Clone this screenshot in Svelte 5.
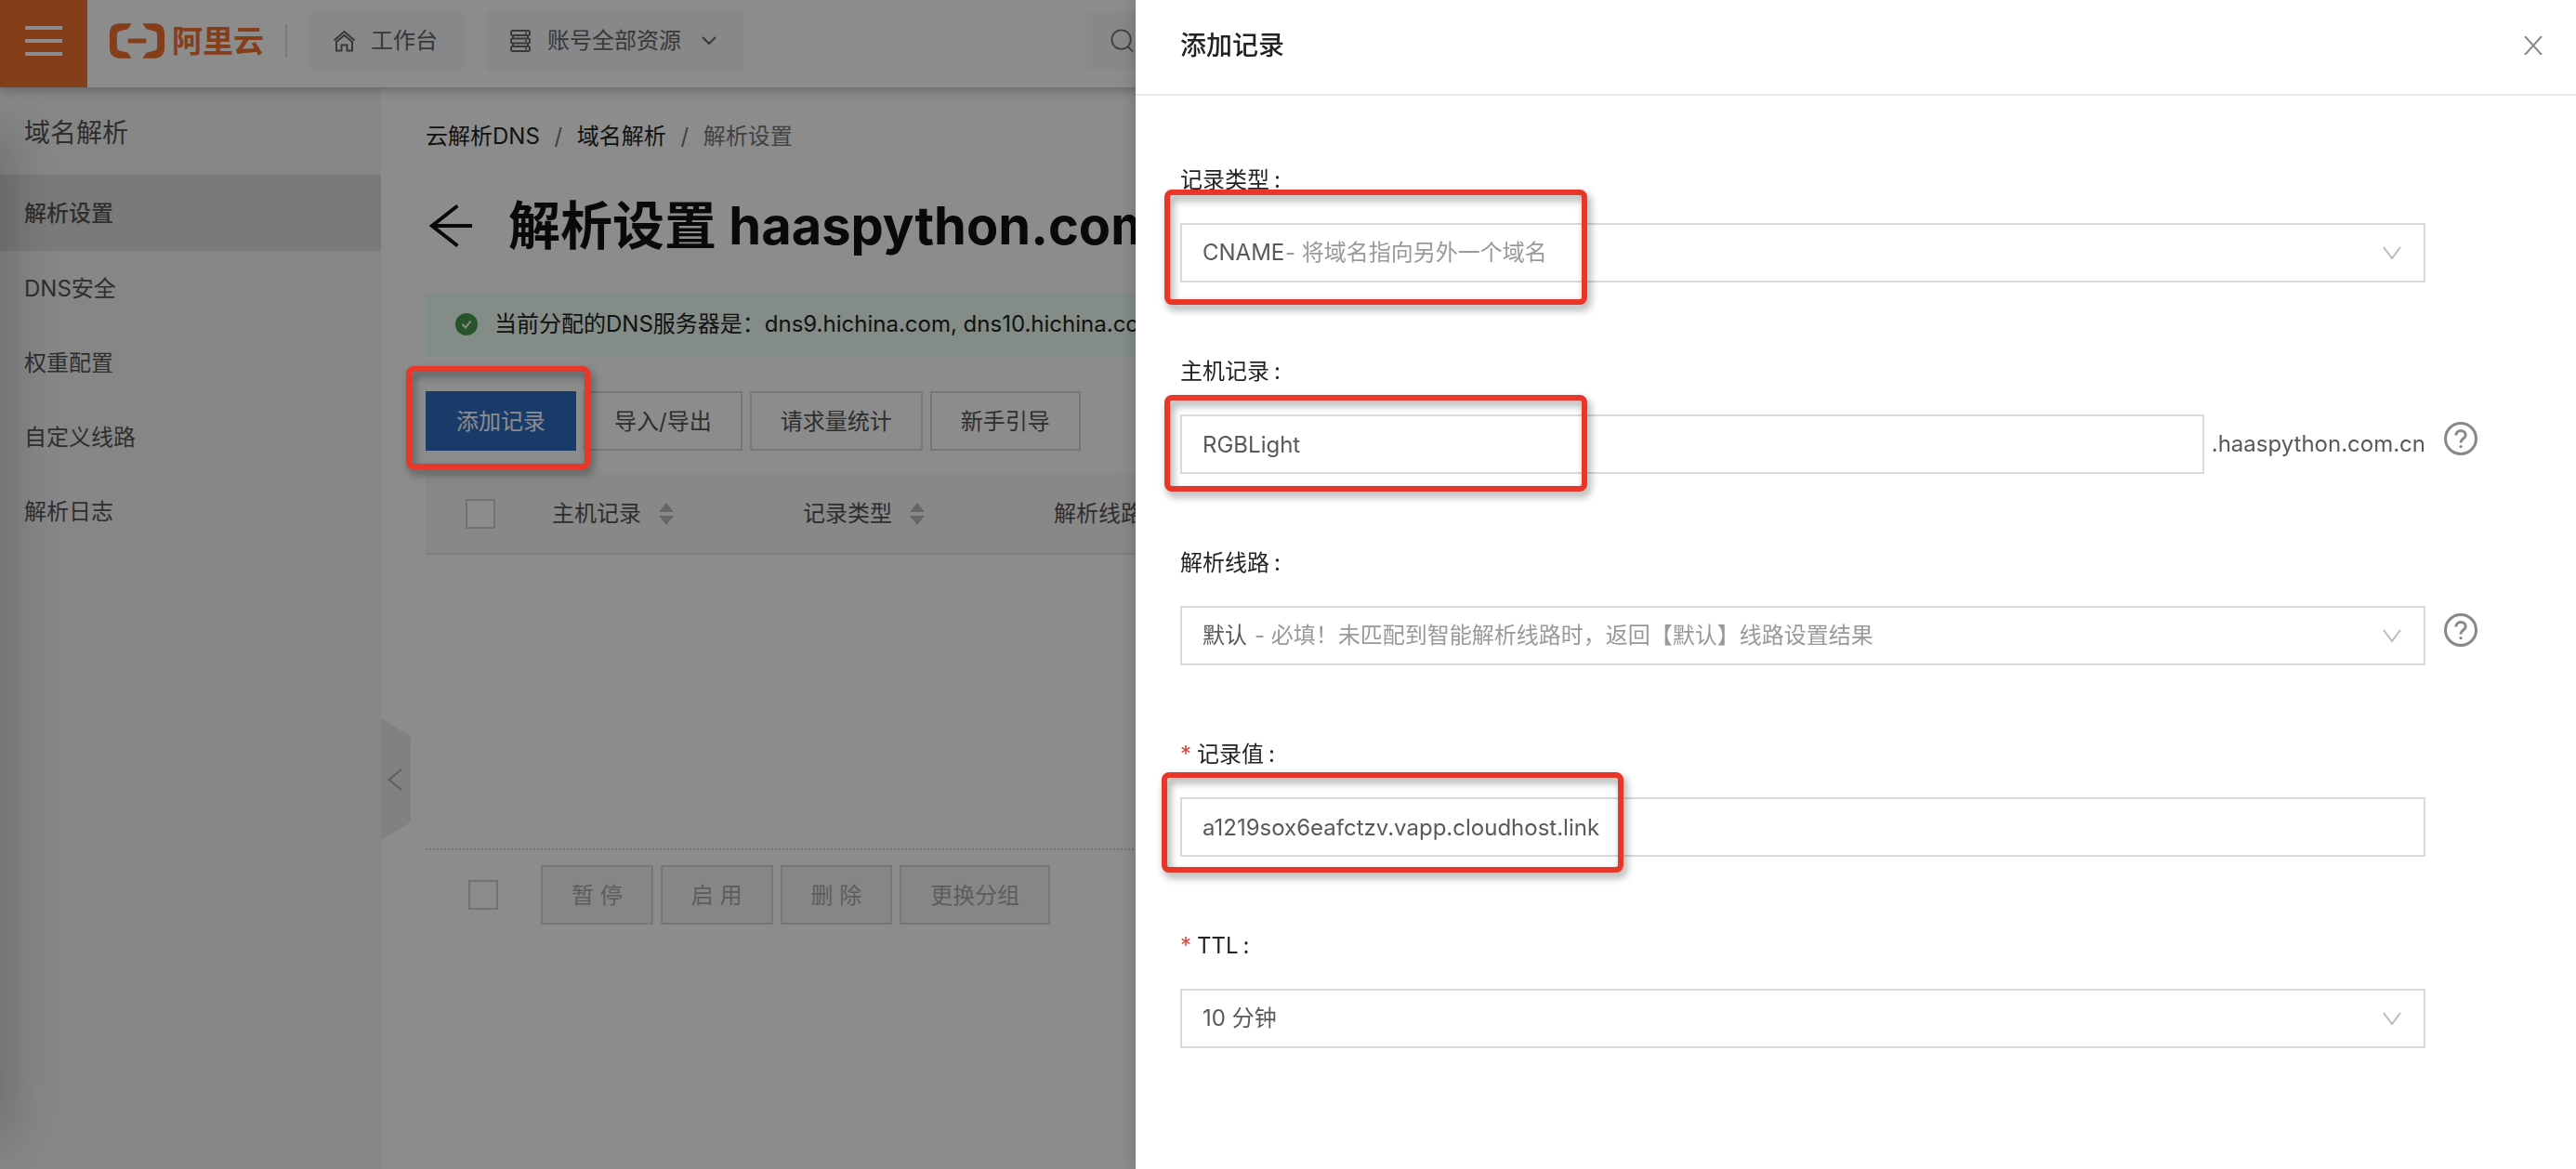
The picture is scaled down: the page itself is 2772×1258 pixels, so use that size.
<script>
  let recordType = $state('CNAME');
  let host = $state('RGBLight');
  let line = $state('默认');
  let value = $state('a1219sox6eafctzv.vapp.cloudhost.link');
  let ttl = $state('10 分钟');

  const menu = ['解析设置', 'DNS安全', '权重配置', '自定义线路', '解析日志'];
  const tools = ['导入/导出', '请求量统计', '新手引导'];
  const batch = ['暂 停', '启 用', '删 除', '更换分组'];
  const columns = ['主机记录', '记录类型', '解析线路'];
</script>

{#snippet chevron()}
  <svg class="chevron" viewBox="0 0 20 14" aria-hidden="true"><path d="M1 1l9 12L19 1" /></svg>
{/snippet}

{#snippet help()}
  <button type="button" class="help" aria-label="帮助">
    <svg viewBox="0 0 36 36" aria-hidden="true">
      <circle cx="18" cy="18" r="16.5" />
      <path d="M12.8 14.6c0-3 2.2-5 5.2-5s5.2 2 5.2 4.700c0 3.600-5.200 3.900-5.200 7.700v.6" />
      <circle class="dot" cx="18" cy="26.600" r="1.700" />
    </svg>
  </button>
{/snippet}

<div class="page">
  <header class="topbar">
    <button type="button" class="burger" aria-label="菜单"><i></i><i></i><i></i></button>
    <a class="logo" href="#home">
      <svg viewBox="0 0 60 38" aria-hidden="true">
        <path d="M24 0H11C4 0 0 4 0 11v16c0 7 4 11 11 11h13l-4-6-8-2c-3-1-4-2-4-4V12c0-2 1-3 4-4l8-2z" />
        <path d="M36 0h13c7 0 11 4 11 11v16c0 7-4 11-11 11H36l4-6 8-2c3-1 4-2 4-4V12c0-2-1-3-4-4l-8-2z" />
        <path d="M20 16.500h20v5H20z" />
      </svg>
      <span>阿里云</span>
    </a>
    <span class="rule"></span>
    <a class="chip" href="#workbench">
      <svg class="home" viewBox="0 0 24 24" aria-hidden="true"><path d="M1 11.500L12 2l11 9.500M3.500 13v9.500H9v-6h6v6h5.500V13L12 6z" /></svg>
      工作台
    </a>
    <button type="button" class="chip wide">
      <svg class="stack" viewBox="0 0 22 24" aria-hidden="true">
        <rect x="1" y="1" width="20" height="5" rx="1.500" /><rect x="1" y="9.500" width="20" height="5" rx="1.500" /><rect x="1" y="18" width="20" height="5" rx="1.500" />
        <path d="M3 6v3.500M19 6v3.500M3 14.500V18M19 14.500V18M16 3.500h2M16 12h2M16 20.500h2" />
      </svg>
      账号全部资源
      <svg class="down" viewBox="0 0 16 10" aria-hidden="true"><path d="M1 1l7 7 7-7" /></svg>
    </button>
    <div class="search">
      <svg viewBox="0 0 28 28" aria-hidden="true"><circle cx="12.500" cy="12.500" r="11" /><path d="M20 20.500l6 6" /></svg>
      <input aria-label="搜索" />
    </div>
  </header>

  <div class="body">
    <nav class="side">
      <h2>域名解析</h2>
      <ul>
        {#each menu as item, i}
          <li><a href="#menu-{i}" class:active={i === 0}>{item}</a></li>
        {/each}
      </ul>
      <button type="button" class="fold" aria-label="收起">
        <svg viewBox="0 0 16 24" aria-hidden="true"><path d="M15 1L1.500 12 15 23" /></svg>
      </button>
      <span class="edge"></span>
    </nav>

    <main>
      <nav class="crumbs" aria-label="路径">
        <a href="#dns">云解析DNS</a><i>/</i><a href="#domain">域名解析</a><i>/</i><span>解析设置</span>
      </nav>
      <div class="heading">
        <button type="button" class="back" aria-label="返回">
          <svg viewBox="0 0 48 48" aria-hidden="true"><path d="M31 2L3 24l28 22M3 24h44" /></svg>
        </button>
        <h1>解析设置 haaspython.com.cn</h1>
      </div>
      <p class="notice">
        <svg viewBox="0 0 24 24" aria-hidden="true"><circle cx="12" cy="12" r="12" /><path d="M7.500 12l3.500 3.500 5.500-7" /></svg>
        <span>当前分配的DNS服务器是：dns9.hichina.com, dns10.hichina.com</span>
      </p>
      <div class="tools">
        <div class="marked">
          <button type="button" class="btn primary">添加记录</button>
          <span class="mark mark-add"></span>
        </div>
        {#each tools as t}<button type="button" class="btn">{t}</button>{/each}
      </div>
      <table>
        <thead>
          <tr>
            <th class="pick"><input type="checkbox" aria-label="全选" /></th>
            {#each columns as c}
              <th>
                <span class="th">{c}
                  <svg viewBox="0 0 16 26" aria-hidden="true"><path d="M8 1l8 10H0zM8 25l8-10H0z" /></svg>
                </span>
              </th>
            {/each}
            <th></th>
          </tr>
        </thead>
      </table>
      <div class="batch">
        <input type="checkbox" aria-label="选择全部记录" />
        <div class="tools">
          {#each batch as b}<button type="button" class="btn" disabled>{b}</button>{/each}
        </div>
      </div>
    </main>
  </div>

  <div class="mask"></div>

  <div class="drawer" role="dialog" aria-labelledby="drawer-title">
    <div class="drawer-head">
      <h3 id="drawer-title">添加记录</h3>
      <button type="button" aria-label="关闭">
        <svg viewBox="0 0 20 20" aria-hidden="true"><path d="M1 0l18 20M19 0L1 20" /></svg>
      </button>
    </div>
    <form>
      <div class="field">
        <label for="type">记录类型<b>:</b></label>
        <div class="control">
          <div class="box">
            <select id="type" bind:value={recordType}><option>CNAME</option></select>
            <span class="hint">- 将域名指向另外一个域名</span>
            {@render chevron()}
          </div>
          <span class="mark mark-type"></span>
        </div>
      </div>
      <div class="field">
        <label for="host">主机记录<b>:</b></label>
        <div class="control">
          <input class="box" id="host" type="text" bind:value={host} />
          <span class="suffix">.haaspython.com.cn</span>
          {@render help()}
          <span class="mark mark-host"></span>
        </div>
      </div>
      <div class="field">
        <label for="line">解析线路<b>:</b></label>
        <div class="control">
          <div class="box">
            <select id="line" bind:value={line}><option>默认</option></select>
            <span class="hint spaced">- 必填！未匹配到智能解析线路时，返回【默认】线路设置结果</span>
            {@render chevron()}
          </div>
          {@render help()}
        </div>
      </div>
      <div class="field">
        <label for="value"><s>*</s>记录值<b>:</b></label>
        <div class="control">
          <input class="box" id="value" type="text" bind:value />
          <span class="mark mark-value"></span>
        </div>
      </div>
      <div class="field">
        <label for="ttl"><s>*</s>TTL<b>:</b></label>
        <div class="control">
          <div class="box">
            <select id="ttl" class="full" bind:value={ttl}><option>10 分钟</option></select>
            {@render chevron()}
          </div>
        </div>
      </div>
    </form>
  </div>
</div>

<style>
  :global(body) {
    margin: 0;
    overflow: hidden;
  }
  .page {
    min-height: 100vh;
    display: flex;
    flex-direction: column;
    font-family: Inter, 'Noto Sans CJK SC', sans-serif;
    font-size: 24px;
    line-height: 36px;
    color: #333;
    background: #fff;
    overflow: hidden;
  }
  .page :is(*, ::before, ::after) {
    box-sizing: border-box;
  }
  button,
  input,
  select {
    font: inherit;
    color: inherit;
    margin: 0;
    border-radius: 0;
  }
  button {
    border: 0;
    padding: 0;
    background: none;
  }
  a {
    color: inherit;
    text-decoration: none;
  }
  svg {
    display: block;
    flex: none;
    fill: none;
    stroke: currentColor;
    stroke-width: 2;
  }
  i {
    font-style: normal;
  }

  /* top bar */
  .topbar {
    position: relative;
    z-index: 1;
    display: flex;
    align-items: center;
    height: 94px;
    background: #fff;
    box-shadow: 0 2px 12px rgba(0, 0, 0, 0.3);
    white-space: nowrap;
  }
  .burger {
    width: 94px;
    height: 94px;
    background: #f37130;
    display: flex;
    flex-direction: column;
    align-items: center;
    justify-content: center;
    gap: 10px;
    padding-bottom: 6px;
  }
  .burger i {
    width: 40px;
    height: 4px;
    background: #fff;
  }
  .logo {
    display: flex;
    align-items: center;
    gap: 8px;
    margin: -6px 0 0 24px;
    color: #f37130;
    font-size: 33px;
    font-weight: 700;
  }
  .logo svg {
    width: 59px;
    height: 38px;
    fill: currentColor;
    stroke: none;
  }
  .rule {
    width: 2px;
    height: 36px;
    margin: -6px 24px 0 23px;
    background: #ddd;
  }
  .chip {
    display: flex;
    align-items: center;
    gap: 16px;
    height: 64px;
    padding: 0 28px 0 25px;
    margin: -6px 24px 0 0;
    border-radius: 4px;
    background: #f6f7fa;
    color: #666;
  }
  .chip.wide {
    gap: 18px;
    padding: 0 30px 0 26px;
  }
  .home {
    width: 25px;
    height: 24px;
  }
  .stack {
    width: 22px;
    height: 24px;
  }
  .down {
    width: 16px;
    height: 10px;
    margin-left: 4px;
    stroke-width: 2;
  }
  .search {
    display: flex;
    align-items: center;
    height: 60px;
    width: 400px;
    margin: -6px 0 0 344px;
    padding-left: 26px;
    background: #f6f7fa;
    color: #777;
  }
  .search svg {
    width: 26px;
    height: 26px;
  }
  .search input {
    border: 0;
    background: none;
    flex: 1;
    min-width: 0;
  }

  /* sidebar */
  .body {
    flex: 1;
    display: flex;
    min-width: 0;
  }
  .side {
    position: relative;
    flex: none;
    width: 410px;
    background: #f5f5f5;
    color: #555;
  }
  .side h2 {
    margin: 0;
    padding: 4px 26px 0;
    font-size: 28px;
    line-height: 90px;
    font-weight: 400;
  }
  .side ul {
    list-style: none;
    margin: 0;
    padding: 0;
  }
  .side a {
    display: block;
    padding: 2px 26px 0;
    line-height: 78px;
  }
  .side a.active {
    line-height: 80px;
    background: #dfdfdf;
    font-weight: 500;
  }
  .fold {
    position: absolute;
    left: 100%;
    top: 679px;
    width: 32px;
    height: 131px;
    padding-left: 7px;
    background: #ebebeb;
    clip-path: polygon(0 0, 30px 18px, 32px 22px, 32px 109px, 30px 113px, 0 131px);
    color: #aaa;
  }
  .fold svg {
    width: 16px;
    height: 24px;
  }
  .edge {
    position: absolute;
    left: -30px;
    top: 64px;
    bottom: 50px;
    width: 20px;
    box-shadow: 0 0 60px 14px rgba(0, 0, 0, 0.27);
  }

  /* content */
  main {
    flex: 1;
    min-width: 0;
    padding: 35px 0 0 48px;
    white-space: nowrap;
  }
  .crumbs {
    display: flex;
    color: #222;
  }
  .crumbs i {
    width: 40px;
    text-align: center;
    color: #777;
  }
  .crumbs span {
    color: #777;
  }
  .heading {
    display: flex;
    align-items: center;
    gap: 38px;
    margin-top: 38px;
    color: #111;
  }
  .back {
    padding-left: 4px;
  }
  .back svg {
    width: 47px;
    height: 48px;
    stroke-width: 4;
  }
  h1 {
    margin: 0;
    font-size: 56px;
    line-height: 80px;
    font-weight: 700;
  }
  .notice {
    display: flex;
    align-items: center;
    gap: 18px;
    height: 68px;
    margin: 32px 0 38px;
    padding-left: 32px;
    background: #eefff6;
    color: #222;
  }
  .notice svg {
    width: 24px;
    height: 24px;
    stroke: #fff;
  }
  .notice circle {
    fill: #4a9a50;
    stroke: none;
  }
  .tools {
    display: flex;
    gap: 8px;
  }
  .marked {
    position: relative;
  }
  .btn {
    height: 64px;
    padding: 2px 31px 0;
    border: 2px solid #d9d9d9;
    background: #fff;
    color: #555;
  }
  .btn.primary {
    border-color: #2d6cc0;
    background: #2d6cc0;
    color: #fff;
  }
  .btn:disabled {
    background: #f5f5f5;
    color: #aaa;
  }
  table {
    width: 100%;
    margin-top: 25px;
    border-collapse: collapse;
    table-layout: fixed;
  }
  thead tr {
    height: 86px;
    background: #f7f7f7;
    border-bottom: 2px solid #e6e6e6;
  }
  th {
    width: 270px;
    padding: 0;
    font-weight: 400;
    text-align: left;
    color: #555;
  }
  th:last-child {
    width: auto;
  }
  th.pick {
    width: 136px;
    padding-left: 43px;
  }
  .th {
    display: flex;
    align-items: center;
    gap: 19px;
  }
  .th svg {
    width: 16px;
    height: 26px;
    fill: #bbb;
    stroke: none;
  }
  input[type='checkbox'] {
    appearance: none;
    display: block;
    width: 32px;
    height: 32px;
    border: 2px solid #d0d0d0;
    background: #fff;
  }
  .batch {
    display: flex;
    align-items: center;
    gap: 46px;
    margin-top: 316px;
    padding: 16px 0 0 46px;
    border-top: 2px dotted #d0d0d0;
  }

  .mask {
    position: fixed;
    inset: 0;
    z-index: 10;
    background: rgba(0, 0, 0, 0.45);
  }
  .mark {
    position: absolute;
    z-index: 11;
    border: 6px solid #e93629;
    border-radius: 8px;
    pointer-events: none;
    filter: drop-shadow(3px 5px 4px rgba(0, 0, 0, 0.4));
  }
  .mark-add {
    inset: -27px -15px -20px -21px;
  }
  .mark-type {
    width: 455px;
    inset: -36px auto -24px -17px;
  }
  .mark-host {
    width: 455px;
    inset: -21px auto -19px -17px;
  }
  .mark-value {
    width: 497px;
    inset: -27px auto -17px -20px;
  }

  /* drawer */
  .drawer {
    position: fixed;
    inset: 0 0 0 auto;
    z-index: 12;
    width: min(1550px, 100%);
    background: #fff;
    box-shadow: -4px 0 16px rgba(0, 0, 0, 0.15);
  }
  .drawer-head {
    display: flex;
    align-items: center;
    justify-content: space-between;
    height: 103px;
    padding: 0 36px 4px 48px;
    border-bottom: 2px solid #e8eaea;
  }
  h3 {
    margin: 0;
    font-size: 28px;
    line-height: 40px;
    font-weight: 500;
    color: #222;
  }
  .drawer-head svg {
    width: 20px;
    height: 20px;
    color: #888;
  }
  form {
    padding: 71px 162px 0 48px;
  }
  .field {
    margin-bottom: 76px;
  }
  label {
    display: block;
    margin-bottom: 28px;
    padding-top: 2px;
    color: #222;
  }
  label b {
    margin-left: 5px;
    font-weight: 400;
  }
  label s {
    margin-right: 6px;
    color: #d9453d;
    text-decoration: none;
  }
  .control {
    position: relative;
    display: flex;
    align-items: center;
    color: #595959;
  }
  .box {
    position: relative;
    display: flex;
    align-items: center;
    flex: 1;
    min-width: 0;
    height: 64px;
    padding: 0 22px;
    border: 2px solid #d9d9d9;
    background: #fff;
    outline: 0;
  }
  select {
    appearance: none;
    flex: none;
    height: 60px;
    padding: 0;
    border: 0;
    background: none;
    outline: 0;
  }
  select.full {
    flex: 1;
  }
  .hint {
    color: #999;
  }
  .hint.spaced {
    margin-left: 8px;
  }
  .chevron {
    position: absolute;
    right: 24px;
    top: 23px;
    width: 20px;
    height: 14px;
    color: #bbb;
    pointer-events: none;
  }
  .suffix {
    margin-left: 8px;
  }
  .help {
    position: absolute;
    left: calc(100% + 20px);
    top: 8px;
    color: #888;
  }
  .help svg {
    width: 36px;
    height: 36px;
    stroke-width: 3;
  }
  .help .dot {
    fill: currentColor;
    stroke: none;
  }
</style>
